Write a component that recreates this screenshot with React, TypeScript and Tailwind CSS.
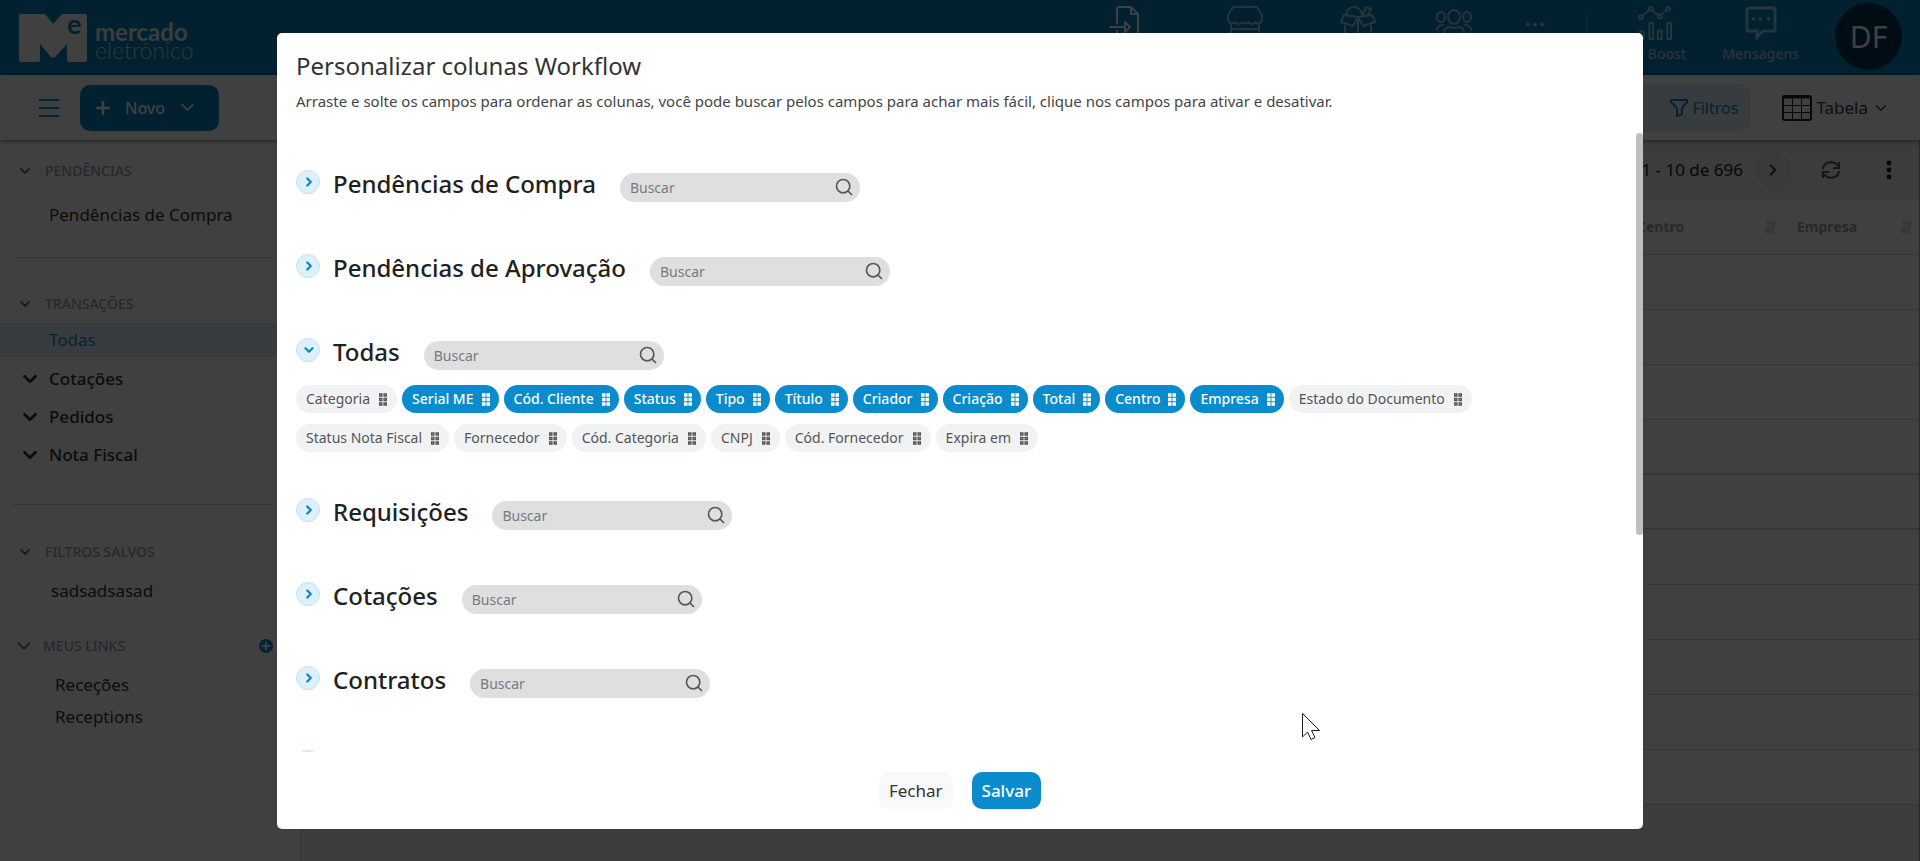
import { useState, type ReactNode } from "react";
import { ChevronDown, ChevronRight, Plus, Search } from "lucide-react";

type Field = { label: string; active: boolean };
type Section = { title: string; open?: boolean; fields?: Field[] };

const FIELDS: Field[] = [
  { label: "Categoria", active: false },
  { label: "Serial ME", active: true },
  { label: "Cód. Cliente", active: true },
  { label: "Status", active: true },
  { label: "Tipo", active: true },
  { label: "Título", active: true },
  { label: "Criador", active: true },
  { label: "Criação", active: true },
  { label: "Total", active: true },
  { label: "Centro", active: true },
  { label: "Empresa", active: true },
  { label: "Estado do Documento", active: false },
  { label: "Status Nota Fiscal", active: false },
  { label: "Fornecedor", active: false },
  { label: "Cód. Categoria", active: false },
  { label: "CNPJ", active: false },
  { label: "Cód. Fornecedor", active: false },
  { label: "Expira em", active: false },
];

const SECTIONS: Section[] = [
  { title: "Pendências de Compra" },
  { title: "Pendências de Aprovação" },
  { title: "Todas", open: true, fields: FIELDS },
  { title: "Requisições" },
  { title: "Cotações" },
  { title: "Contratos" },
  { title: "Pedidos" },
];

const ROWS = [
  "border-b",
  "border-b",
  "border-b",
  "border-b-2",
  "border-b-2",
  "border-b",
  "border-b",
  "border-b",
  "border-b",
  "border-b",
];

function Logo() {
  return (
    <a href="#" aria-label="mercado eletrônico" className="flex items-center gap-2 text-white">
      <svg width="68" height="48" viewBox="0 0 68 48" fill="currentColor" className="overflow-visible">
        <path d="M2 0H26L34 10L43 0H66Q68 0 68 2V46Q68 48 66 48H50Q48 48 48 46V30L36 43Q34 44 32 43L21 30V46Q21 48 19 48H2Q0 48 0 46V2Q0 0 2 0Z" />
        <text x="48" y="20" fontSize="27" fontWeight="700" fontFamily="Lato, sans-serif" fill="#0882be">
          e
        </text>
      </svg>
      <span className="flex flex-col pt-[6px] font-[Lato,sans-serif] leading-[19px]">
        <span className="text-2xl leading-[19px] font-bold opacity-90">mercado</span>
        <span className="text-[23px] leading-[19px] font-light opacity-70">eletrônico</span>
      </span>
    </a>
  );
}

function NavIcon({ children, className }: { children: ReactNode; className: string }) {
  return (
    <a href="#" className={`flex flex-col items-center gap-[6px] text-white ${className}`}>
      {children}
    </a>
  );
}

function Stroke({ children, size = 36 }: { children: ReactNode; size?: number }) {
  return (
    <svg
      width={size}
      height={size}
      viewBox="0 0 36 36"
      fill="none"
      stroke="currentColor"
      strokeWidth="2"
      strokeLinejoin="round"
      strokeLinecap="round"
    >
      {children}
    </svg>
  );
}

function Header() {
  return (
    <header className="flex h-[75px] shrink-0 items-center justify-between bg-[#0882be] pl-[19px] pr-[18px]">
      <Logo />
      <nav className="flex h-full items-start gap-9 pt-[6px] text-sm">
        <NavIcon className="w-16">
          <Stroke>
            <path d="M10 17V3a2 2 0 0 1 2-2h12l7 7v25a2 2 0 0 1-2 2H12a2 2 0 0 1-2-2v-8M24 1v7h7M3 21h15M18 16v10l5-5z" />
          </Stroke>
        </NavIcon>
        <NavIcon className="w-[104px] opacity-60">
          <Stroke>
            <path d="M6 1h24l5 8v5a4 4 0 0 1-7 2 4 4 0 0 1-7 0 4 4 0 0 1-6 0 4 4 0 0 1-7 0 4 4 0 0 1-7-2V9zM4 17v18M32 17v18M4 23h28" />
          </Stroke>
        </NavIcon>
        <NavIcon className="w-[49px] opacity-60">
          <Stroke>
            <path d="M5 17v14l13 4 13-4V17M18 11v24M18 11L4 9l-3 7 12 4zM18 11l14-2 3 7-12 4zM6 9a8 8 0 0 1 16 0M23 9l3-8 5 2-3 6" />
          </Stroke>
        </NavIcon>
        <NavIcon className="w-[72px] opacity-60">
          <Stroke>
            <ellipse cx="18" cy="11" rx="6" ry="7" />
            <ellipse cx="5" cy="11" rx="4" ry="5" />
            <ellipse cx="31" cy="11" rx="4" ry="5" />
            <path d="M8 33v-6q0-5 5-6 5 2 10 0 5 1 5 6v6zM1 24q0-5 6-5M35 24q0-5-6-5" />
          </Stroke>
        </NavIcon>
        <NavIcon className="mr-[6px] w-[18px] pt-4 opacity-60">
          <svg width="18" height="5" viewBox="0 0 18 5" fill="currentColor">
            <circle cx="2" cy="2.500" r="2" />
            <circle cx="9" cy="2.500" r="2" />
            <circle cx="16" cy="2.500" r="2" />
          </svg>
        </NavIcon>
        <div className="mt-2 h-10 w-px bg-white/30" />
        <NavIcon className="opacity-60">
          <Stroke size={34}>
            <path d="M2 35v-8h4v8zM12 35V18h4v17zM21 35v-9h4v9zM31 35V18h4v17zM5 10l7-6M15 4l6 6M24 10l6-6" />
            <circle cx="3" cy="12" r="2" />
            <circle cx="13.500" cy="3" r="2" />
            <circle cx="23" cy="11" r="2" />
            <circle cx="32" cy="3" r="2" />
          </Stroke>
          <span className="leading-4 font-medium">ME Boost</span>
        </NavIcon>
        <NavIcon className="opacity-60">
          <svg width="34" height="34" viewBox="0 0 34 34" fill="none" stroke="currentColor" strokeWidth="3">
            <path d="M5 2h24a2 2 0 0 1 2 2v19a2 2 0 0 1-2 2H19l-6 6v-6H5a2 2 0 0 1-2-2V4a2 2 0 0 1 2-2z" />
            <path d="M8 13h3M15 13h3M23 13h3" />
          </svg>
          <span className="leading-4 font-medium">Mensagens</span>
        </NavIcon>
        <button className="-mt-[3px] flex size-[67px] items-center justify-center rounded-full bg-[#003652] text-3xl text-white">
          DF
        </button>
      </nav>
    </header>
  );
}

function Toolbar() {
  return (
    <div className="relative z-10 flex h-[65px] shrink-0 items-center bg-white pl-[39px] pr-[30px] shadow-[0_1px_5px_rgba(0,0,0,0.5)]">
      <button aria-label="Menu" className="mr-[21px] flex flex-col gap-[6px]">
        <span className="h-[2px] w-5 bg-[#0a8bcc]" />
        <span className="h-[2px] w-5 bg-[#0a8bcc]" />
        <span className="h-[2px] w-5 bg-[#0a8bcc]" />
      </button>
      <button className="flex h-[46px] items-center gap-3 rounded-[10px] bg-[#0882be] pr-[21px] pl-[13px] font-medium text-white">
        <Plus size={20} strokeWidth={3} />
        Novo
        <ChevronDown size={21} strokeWidth={2} />
      </button>
      <div className="ml-auto flex items-center gap-8 text-gray-700">
        <button className="flex h-12 items-center gap-1 rounded-[10px] bg-[#e2f0fa] pr-3 pl-9 text-[#0a8bcc]">
          <svg width="18" height="18" viewBox="0 0 18 18" fill="none" stroke="currentColor" strokeWidth="2" strokeLinejoin="round">
            <path d="M1 1h16v2l-5 6v6l-5 2V9L1 3z" />
          </svg>
          Filtros
        </button>
        <button className="flex items-center gap-1 text-[17px]">
          <svg width="30" height="26" viewBox="0 0 30 26" fill="none" stroke="#222" strokeWidth="1">
            <rect x="1" y="1" width="28" height="24" rx="2" strokeWidth="2" />
            <path d="M1 10.500h28M1 17.500h28M10.500 3v22M19.500 3v22" />
            <path d="M1 2h28" strokeWidth="3" />
          </svg>
          Tabela
          <ChevronDown size={18} />
        </button>
      </div>
    </div>
  );
}

function SideHeading({ children }: { children: ReactNode }) {
  return (
    <button className="flex h-6 items-center gap-3 pl-[17px] text-sm font-medium text-gray-400">
      <ChevronDown size={16} strokeWidth={3} className="text-gray-500" />
      {children}
    </button>
  );
}

function Sidebar() {
  return (
    <aside className="flex w-[301px] shrink-0 flex-col border-r border-gray-300 bg-white pt-[19px] text-[17px] text-[#333]">
      <SideHeading>PENDÊNCIAS</SideHeading>
      <a href="#" className="mt-5 pl-[49px] leading-6">
        Pendências de Compra
      </a>
      <hr className="mt-[30px] ml-3 border-gray-300" />
      <div className="mt-[34px] flex flex-col">
        <SideHeading>TRANSAÇÕES</SideHeading>
      </div>
      <a href="#" className="mt-[7px] bg-[#e2f0fa] pl-[49px] leading-[34px] text-[#0a8bcc]">
        Todas
      </a>
      <div className="mt-[3px] flex flex-col font-medium">
        {["Cotações", "Pedidos", "Nota Fiscal"].map((name) => (
          <button key={name} className="flex h-[38px] items-center gap-2 pl-[19px]">
            <ChevronDown size={22} strokeWidth={3} />
            {name}
          </button>
        ))}
      </div>
      <hr className="mt-[30px] ml-3 border-gray-300" />
      <div className="mt-[35px] flex flex-col">
        <SideHeading>FILTROS SALVOS</SideHeading>
      </div>
      <a href="#" className="mt-[15px] pl-[51px] leading-6">
        sadsadsasad
      </a>
      <div className="mt-[31px] flex h-6 items-center pr-[27px] pl-[13px]">
        <button className="flex items-center gap-2 text-sm font-medium text-gray-400">
          <ChevronDown size={22} strokeWidth={2} className="text-gray-500" />
          MEUS LINKS
        </button>
        <button aria-label="Adicionar link" className="ml-auto rounded-full bg-[#0a8bcc] p-px text-white">
          <Plus size={12} strokeWidth={4} />
        </button>
      </div>
      <a href="#" className="mt-[11px] pl-[55px] leading-8">
        Receções
      </a>
      <a href="#" className="pl-[55px] leading-8">
        Receptions
      </a>
    </aside>
  );
}

function SortIcon() {
  return (
    <svg width="11" height="14" viewBox="0 0 11 14" fill="none" stroke="currentColor" strokeWidth="2">
      <path d="M3 0v12M0 10l3 3 3-3M8 14V2M5 4l3-3 3 3" />
    </svg>
  );
}

function Content() {
  return (
    <main className="flex min-w-0 flex-1 flex-col border-r border-gray-400 bg-[#ededed]">
      <div className="flex h-[60px] shrink-0 items-center justify-end pr-[27px]">
        <span className="text-[17px]">1 - 10 de 696</span>
        <button
          aria-label="Próxima página"
          className="ml-3 flex size-9 items-center justify-center rounded-full bg-[#e8e8e8] text-gray-700"
        >
          <ChevronRight size={18} strokeWidth={3} />
        </button>
        <button aria-label="Atualizar" className="ml-[31px] text-gray-600">
          <svg width="18" height="18" viewBox="0 0 18 18" fill="none" stroke="currentColor" strokeWidth="2">
            <path d="M1 8a8 7 0 0 1 15-3M17 1v6h-6M17 10a8 7 0 0 1-15 3M1 17v-6h6" />
          </svg>
        </button>
        <button aria-label="Mais opções" className="ml-[46px]">
          <svg width="6" height="20" viewBox="0 0 6 20" fill="currentColor">
            <circle cx="3" cy="3" r="2.400" />
            <circle cx="3" cy="10" r="2.400" />
            <circle cx="3" cy="17" r="2.400" />
          </svg>
        </button>
      </div>
      <table className="w-full border-collapse bg-white text-left text-sm text-gray-400">
        <thead>
          <tr className="h-[54px] border-b border-gray-300">
            <th />
            <th className="w-[160px] font-bold">
              <span className="flex items-center justify-between pr-[21px]">
                Centro
                <span className="text-gray-300">
                  <SortIcon />
                </span>
              </span>
            </th>
            <th className="w-[122px] font-bold">
              <span className="flex items-center justify-between pr-[7px]">
                Empresa
                <span className="text-gray-300">
                  <SortIcon />
                </span>
              </span>
            </th>
          </tr>
        </thead>
        <tbody>
          {ROWS.map((border, i) => (
            <tr key={i} className={`h-[55px] border-gray-300 ${border}`}>
              <td colSpan={3} />
            </tr>
          ))}
        </tbody>
      </table>
    </main>
  );
}

function Grip() {
  return (
    <svg width="8" height="13" viewBox="0 0 9 14" fill="currentColor">
      <path d="M0 0h4v4H0zM5 0h4v4H5zM0 5h4v4H0zM5 5h4v4H5zM0 10h4v4H0zM5 10h4v4H5z" />
      <path
        d="M1.500 1.500h1v1h-1zM6.500 1.500h1v1h-1zM1.500 6.500h1v1h-1zM6.500 6.500h1v1h-1zM1.500 11.500h1v1h-1zM6.500 11.500h1v1h-1z"
        className="fill-white/50"
      />
    </svg>
  );
}

function Chip({ label, initial }: { label: string; initial: boolean }) {
  const [active, setActive] = useState(initial);

  return (
    <button
      aria-pressed={active}
      onClick={() => setActive(!active)}
      className={`flex h-7 items-center rounded-full pl-[10px] text-sm ${
        active ? "gap-2 bg-[#0a8bcc] pr-[9px] font-medium text-white" : "gap-[9px] bg-[#f1f2f4] pr-[10px] text-[#555]"
      }`}
    >
      {label}
      <Grip />
    </button>
  );
}

function ColumnSection({ title, open = false, fields = [] }: Section) {
  const [expanded, setExpanded] = useState(open);

  return (
    <section className={expanded ? "mb-[46px]" : "mb-[54px]"}>
      <div className="flex h-[30px] items-start">
        <button
          aria-label={`Expandir ${title}`}
          aria-expanded={expanded}
          onClick={() => setExpanded(!expanded)}
          className="flex size-6 items-center justify-center rounded-full border border-[#bfe2f4] bg-[#e0f0fa] pl-px text-[#0a8bcc]"
        >
          {expanded ? <ChevronDown size={14} strokeWidth={4} /> : <ChevronRight size={14} strokeWidth={4} />}
        </button>
        <h2 className="ml-[13px] text-2xl leading-7 font-medium text-[#212121]">{title}</h2>
        <div className="relative mt-[3px] ml-6">
          <input
            type="text"
            placeholder="Buscar"
            aria-label={`Buscar em ${title}`}
            className="h-[29px] w-60 rounded-full bg-[#dfdfdf] pr-9 pl-[10px] text-sm placeholder:text-[#757b84]"
          />
          <Search size={20} className="absolute top-1 right-[6px] text-[#555a60]" />
        </div>
      </div>
      {expanded && (
        <div className="mt-[17px] flex flex-wrap gap-x-[5px] gap-y-[11px] pr-32">
          {fields.map((f) => (
            <Chip key={f.label} label={f.label} initial={f.active} />
          ))}
        </div>
      )}
    </section>
  );
}

function ColumnsDialog() {
  return (
    <div className="absolute inset-0 z-20 flex justify-center bg-black/75 pt-[33px] pb-8">
      <div
        role="dialog"
        aria-labelledby="dialog-title"
        className="flex w-full max-w-[1366px] flex-col rounded-[5px] bg-white"
      >
        <div className="px-[19px] pt-[15px]">
          <h1 id="dialog-title" className="text-2xl leading-9 text-[#333]">
            Personalizar colunas Workflow
          </h1>
          <p className="mt-[5px] text-[15px] leading-6 text-[#444]">
            Arraste e solte os campos para ordenar as colunas, você pode buscar pelos campos para achar mais fácil, clique nos
            campos para ativar e desativar.
          </p>
        </div>
        <div className="relative mt-5 flex min-h-0 flex-1">
          <div className="flex-1 overflow-y-auto px-[19px] pt-[37px] [scrollbar-width:none]">
            {SECTIONS.map((s) => (
              <ColumnSection key={s.title} {...s} />
            ))}
          </div>
          <div className="absolute top-0 right-0 h-[65%] w-[7px] rounded-full bg-[#bfbfbf]" />
        </div>
        <div className="flex h-[77px] shrink-0 items-center justify-center gap-[19px]">
          <button className="h-[37px] rounded-[10px] bg-[#f8f9fb] px-[10px] text-[17px] text-[#333]">Fechar</button>
          <button className="h-[37px] rounded-[10px] bg-[#0a8bcc] px-[10px] text-[17px] font-medium text-white">
            Salvar
          </button>
        </div>
      </div>
      <svg className="absolute top-[712px] left-[1301px]" width="20" height="29" viewBox="0 0 20 29" fill="#fff" stroke="#1a1a2a">
        <path d="M1.500 1.500V25l5-5 3.500 7.500 4-2L10.500 18.500H18.500Z" />
      </svg>
    </div>
  );
}

export default function App() {
  return (
    <div className="relative flex h-screen flex-col overflow-hidden font-['Noto_Sans','Open_Sans',sans-serif] text-base text-[#222]">
      <Header />
      <Toolbar />
      <div className="flex min-h-0 flex-1">
        <Sidebar />
        <Content />
      </div>
      <ColumnsDialog />
    </div>
  );
}
